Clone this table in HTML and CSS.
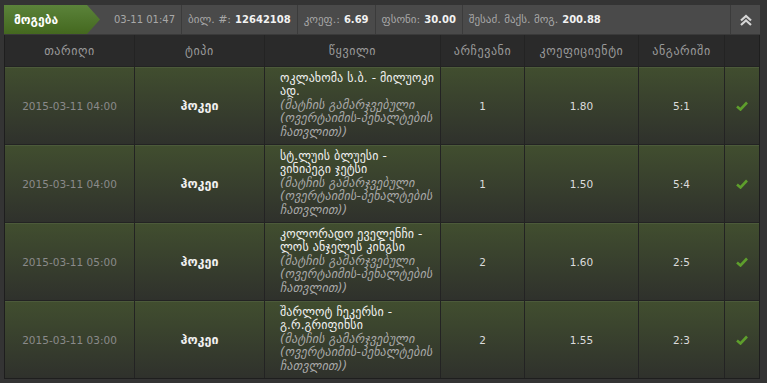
FILE: index.html
```html
<!DOCTYPE html>
<html lang="ka">
<head>
<meta charset="utf-8">
<link rel="stylesheet" href="styles.css">
</head>
<body>
<div class="panel">
  <div class="topbar">
    <div class="tab">მოგება</div>
    <div class="seg first"><span class="dig">03-11 01:47</span></div>
    <div class="seg">ბილ. #: <b>12642108</b></div>
    <div class="seg">კოეფ.: <b>6.69</b></div>
    <div class="seg">ფსონი: <b>30.00</b></div>
    <div class="seg grow">შესაძ. მაქს. მოგ. <b>200.88</b></div>
    <div class="collapse">
      <svg width="14" height="12" viewBox="0 0 14 12"><path d="M2 6.5 L7 2 L12 6.5 M2 11 L7 6.5 L12 11" fill="none" stroke="#d6d6d6" stroke-width="2.2"/></svg>
    </div>
  </div>
  <div class="table">
    <div class="th">თარიღი</div>
    <div class="th">ტიპი</div>
    <div class="th">წყვილი</div>
    <div class="th">არჩევანი</div>
    <div class="th">კოეფიციენტი</div>
    <div class="th">ანგარიში</div>
    <div class="th"></div>

    <div class="td date">2015-03-11 04:00</div>
    <div class="td type">ჰოკეი</div>
    <div class="td event"><span class="name">ოკლახომა ს.ბ. - მილუოკი<br>ად.</span><span class="note">(მატჩის გამარჯვებული<br>(ოვერტაიმის-პენალტების<br>ჩათვლით))</span></div>
    <div class="td num">1</div>
    <div class="td num">1.80</div>
    <div class="td num">5:1</div>
    <div class="td ok"><svg width="12" height="10" viewBox="0 0 12 10"><path d="M1 5.5 L4.5 8.5 L11 1.5" fill="none" stroke="#5e9e2c" stroke-width="2.6"/></svg></div>

    <div class="td date">2015-03-11 04:00</div>
    <div class="td type">ჰოკეი</div>
    <div class="td event"><span class="name">სტ.ლუის ბლუესი -<br>ვინიპეგი ჯეტსი</span><span class="note">(მატჩის გამარჯვებული<br>(ოვერტაიმის-პენალტების<br>ჩათვლით))</span></div>
    <div class="td num">1</div>
    <div class="td num">1.50</div>
    <div class="td num">5:4</div>
    <div class="td ok"><svg width="12" height="10" viewBox="0 0 12 10"><path d="M1 5.5 L4.5 8.5 L11 1.5" fill="none" stroke="#5e9e2c" stroke-width="2.6"/></svg></div>

    <div class="td date">2015-03-11 05:00</div>
    <div class="td type">ჰოკეი</div>
    <div class="td event"><span class="name">კოლორადო ეველენჩი -<br>ლოს ანჯელეს კინგსი</span><span class="note">(მატჩის გამარჯვებული<br>(ოვერტაიმის-პენალტების<br>ჩათვლით))</span></div>
    <div class="td num">2</div>
    <div class="td num">1.60</div>
    <div class="td num">2:5</div>
    <div class="td ok"><svg width="12" height="10" viewBox="0 0 12 10"><path d="M1 5.5 L4.5 8.5 L11 1.5" fill="none" stroke="#5e9e2c" stroke-width="2.6"/></svg></div>

    <div class="td date">2015-03-11 03:00</div>
    <div class="td type">ჰოკეი</div>
    <div class="td event"><span class="name">შარლოტ ჩეკერსი -<br>გ.რ.გრიფინსი</span><span class="note">(მატჩის გამარჯვებული<br>(ოვერტაიმის-პენალტების<br>ჩათვლით))</span></div>
    <div class="td num">2</div>
    <div class="td num">1.55</div>
    <div class="td num">2:3</div>
    <div class="td ok"><svg width="12" height="10" viewBox="0 0 12 10"><path d="M1 5.5 L4.5 8.5 L11 1.5" fill="none" stroke="#5e9e2c" stroke-width="2.6"/></svg></div>
  </div>
</div>
</body>
</html>
```
FILE: styles.css
```css
html, body {
  margin: 0;
  padding: 0;
  background: #343434;
}
body {
  font-family: "DejaVu Sans", "Noto Sans", sans-serif;
  font-size: 11px;
  color: #ddd;
  padding: 5px 7px 6px 4px;
}
.panel {
  background: #2a2a2a;
  border: 1px solid #1e1e1e;
  border-top: 0;
}
.topbar {
  display: flex;
  align-items: stretch;
  height: 29px;
  background: #4a4a4a;
  border-bottom: 1px solid #3a3a3a;
  color: #a8a8a8;
  margin-left: -1px;
  margin-right: -1px;
}
.tab {
  width: 96px;
  flex: none;
  display: flex;
  align-items: center;
  padding-left: 10px;
  box-sizing: border-box;
  color: #fff;
  font-size: 12px;
  font-weight: bold;
  background: linear-gradient(#5b833a, #44681f);
  clip-path: polygon(0 0, 83px 0, 100% 50%, 83px 100%, 0 100%);
}
.seg {
  display: flex;
  align-items: center;
  gap: 4px;
  padding: 0 6px;
  border-right: 1px solid #3b3b3b;
  white-space: nowrap;
}
.seg.first { padding-left: 14px; }
.dig { font-size: 10px; }
.seg b { color: #f2f2f2; font-size: 10px; }
.seg.grow { flex: 1; }
.collapse {
  width: 29px;
  display: flex;
  align-items: center;
  justify-content: center;
}
.table {
  display: grid;
  grid-template-columns: 129px 129px 175px 83px 113px 85px 1fr;
  column-gap: 1px;
  row-gap: 1px;
  background: #232323;
}
.th {
  background: #2a2a2a;
  height: 31px;
  display: flex;
  align-items: center;
  justify-content: center;
  color: #9a9a9a;
  font-size: 12px;
  letter-spacing: 0.6px;
}
.td {
  height: 77px;
  box-sizing: border-box;
  background: linear-gradient(#414e2f, #2f312c);
  box-shadow: inset 0 1px 0 #4c5a3a;
  display: flex;
  align-items: center;
  justify-content: center;
}
.date { color: #8a8a8a; font-size: 10.5px; }
.type { color: #f0f0f0; font-weight: bold; font-size: 12.5px; }
.event {
  flex-direction: column;
  align-items: flex-start;
  justify-content: center;
  padding-left: 15px;
  font-size: 12px;
  line-height: 13.5px;
  white-space: nowrap;
}
.name { color: #f0f0f0; letter-spacing: 0.1px; }
.note { color: #a9a9a9; font-style: italic; letter-spacing: 0.15px; }
.num { color: #dcdcdc; font-size: 10.5px; }
```
